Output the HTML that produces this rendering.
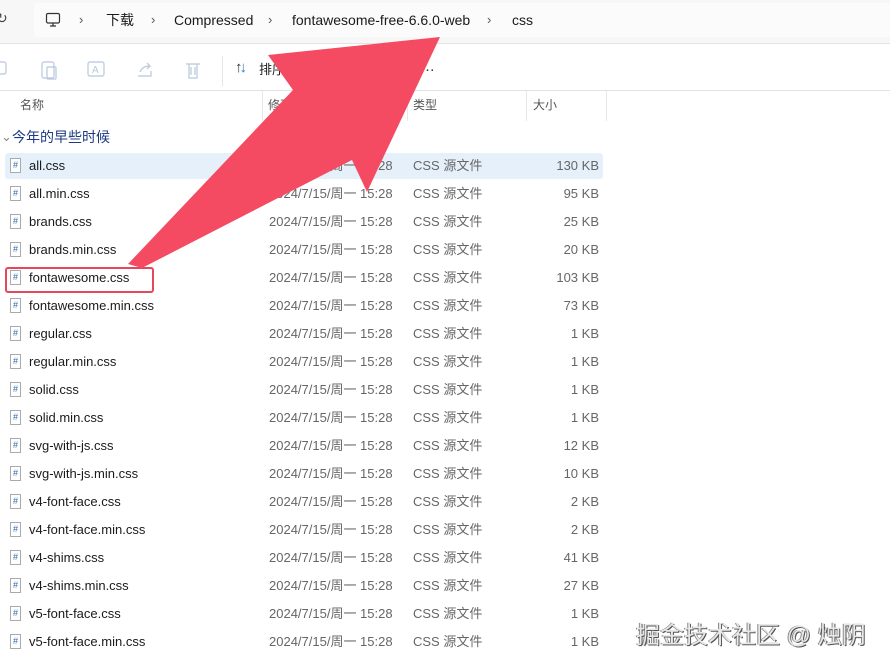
<!DOCTYPE html>
<html><head><meta charset="utf-8"><style>
*{margin:0;padding:0;box-sizing:border-box}
body{width:890px;height:671px;overflow:hidden;background:#fff;font-family:"Liberation Sans","Noto Sans CJK SC",sans-serif;position:relative;color:#1a1a1a}
.a{position:absolute;white-space:nowrap}
.top{position:absolute;left:0;top:0;width:890px;height:44px;background:#f7f7f7;border-bottom:1px solid #e3e3e3}
.addr{position:absolute;left:34px;top:3px;width:856px;height:34px;background:#fbfbfb}
.bc{font-size:14px;color:#1a1a1a;top:11px;line-height:18px}
.chev{font-size:13px;color:#555;top:11px;line-height:18px}
.tb{position:absolute;left:0;top:44px;width:890px;height:47px;border-bottom:1px solid #e2e2e2}
.hd{font-size:12px;color:#555;top:97px;line-height:16px}
.sep{position:absolute;top:91px;width:1px;height:30px;background:#e8e8e8}
.row{position:absolute;left:5px;width:598px;height:26px;font-size:13px;line-height:16px}
.row .n{position:absolute;left:24px;top:5px;color:#1a1a1a}
.row .d{position:absolute;left:264px;top:5px;color:#666}
.row .t{position:absolute;left:408px;top:5px;color:#666}
.row .s{position:absolute;right:4px;top:5px;color:#666}
.ic{position:absolute;left:5px;top:5px;width:11px;height:15px;border:1px solid #aaa;background:#fff;font-size:9px;color:#2a6ab0;text-align:center;line-height:13px}
</style></head><body>
<div class="top"><div class="addr"></div></div>
<div class="a" style="left:-4px;top:10px;font-size:14px;color:#444">↻</div>
<svg class="a" style="left:45px;top:12px" width="16" height="16" viewBox="0 0 16 16"><rect x="1.5" y="1.5" width="13" height="9.5" rx="1.5" fill="none" stroke="#333" stroke-width="1.2"/><path d="M5 14h6M8 11v3" stroke="#333" stroke-width="1.2"/></svg>
<div class="a chev" style="left:79px">›</div>
<div class="a bc" style="left:106px">下载</div>
<div class="a chev" style="left:151px">›</div>
<div class="a bc" style="left:174px">Compressed</div>
<div class="a chev" style="left:268px">›</div>
<div class="a bc" style="left:292px">fontawesome-free-6.6.0-web</div>
<div class="a chev" style="left:487px">›</div>
<div class="a bc" style="left:512px">css</div>
<div class="tb"></div>
<svg class="a" style="left:0;top:58px" width="210" height="24" viewBox="0 0 210 24" fill="none" stroke="#b8c8dc" stroke-width="1.2">
<rect x="-4" y="4" width="10" height="12" rx="2"/>
<rect x="42" y="4" width="12" height="16" rx="2"/><rect x="47" y="9" width="9" height="12" rx="1"/>
<rect x="88" y="4" width="16" height="14" rx="2"/><text x="92" y="15" font-size="10" fill="#b8c8dc" stroke="none">A</text>
<path d="M138 18h13v-5M140 14c2-5 6-6 10-6l-3-3M150 8l-3 3"/>
<path d="M186 6h14M189 6v14h8V6M191 9v8M195 9v8"/>
</svg>
<div class="a" style="left:222px;top:56px;width:1px;height:30px;background:#e6e6e6"></div>
<div class="a" style="left:235px;top:58px;font-size:15px;line-height:20px;color:#333">↑<span style="color:#2a7ad0;margin-left:-3px">↓</span></div>
<div class="a" style="left:259px;top:61px;font-size:13px;line-height:18px">排序</div>
<div class="a" style="left:420px;top:58px;font-size:15px;color:#333">…</div>
<div class="a hd" style="left:20px">名称</div>
<div class="a hd" style="left:268px">修改日期</div>
<div class="a hd" style="left:413px">类型</div>
<div class="a hd" style="left:533px">大小</div>
<div class="sep" style="left:262px"></div><div class="sep" style="left:407px"></div><div class="sep" style="left:526px"></div><div class="sep" style="left:606px"></div>
<div class="a" style="left:1px;top:128px;font-size:13px;line-height:18px;color:#888">⌄</div>
<div class="a" style="left:12px;top:128px;font-size:14px;line-height:18px;color:#1b3a82">今年的早些时候</div>
<div class="row" style="top:153px;background:#e5f0fb;border-radius:3px"><div class="ic">#</div><div class="n">all.css</div><div class="d">2024/7/15/周一 15:28</div><div class="t">CSS 源文件</div><div class="s">130 KB</div></div>
<div class="row" style="top:181px"><div class="ic">#</div><div class="n">all.min.css</div><div class="d">2024/7/15/周一 15:28</div><div class="t">CSS 源文件</div><div class="s">95 KB</div></div>
<div class="row" style="top:209px"><div class="ic">#</div><div class="n">brands.css</div><div class="d">2024/7/15/周一 15:28</div><div class="t">CSS 源文件</div><div class="s">25 KB</div></div>
<div class="row" style="top:237px"><div class="ic">#</div><div class="n">brands.min.css</div><div class="d">2024/7/15/周一 15:28</div><div class="t">CSS 源文件</div><div class="s">20 KB</div></div>
<div class="row" style="top:265px"><div class="ic">#</div><div class="n">fontawesome.css</div><div class="d">2024/7/15/周一 15:28</div><div class="t">CSS 源文件</div><div class="s">103 KB</div></div>
<div class="row" style="top:293px"><div class="ic">#</div><div class="n">fontawesome.min.css</div><div class="d">2024/7/15/周一 15:28</div><div class="t">CSS 源文件</div><div class="s">73 KB</div></div>
<div class="row" style="top:321px"><div class="ic">#</div><div class="n">regular.css</div><div class="d">2024/7/15/周一 15:28</div><div class="t">CSS 源文件</div><div class="s">1 KB</div></div>
<div class="row" style="top:349px"><div class="ic">#</div><div class="n">regular.min.css</div><div class="d">2024/7/15/周一 15:28</div><div class="t">CSS 源文件</div><div class="s">1 KB</div></div>
<div class="row" style="top:377px"><div class="ic">#</div><div class="n">solid.css</div><div class="d">2024/7/15/周一 15:28</div><div class="t">CSS 源文件</div><div class="s">1 KB</div></div>
<div class="row" style="top:405px"><div class="ic">#</div><div class="n">solid.min.css</div><div class="d">2024/7/15/周一 15:28</div><div class="t">CSS 源文件</div><div class="s">1 KB</div></div>
<div class="row" style="top:433px"><div class="ic">#</div><div class="n">svg-with-js.css</div><div class="d">2024/7/15/周一 15:28</div><div class="t">CSS 源文件</div><div class="s">12 KB</div></div>
<div class="row" style="top:461px"><div class="ic">#</div><div class="n">svg-with-js.min.css</div><div class="d">2024/7/15/周一 15:28</div><div class="t">CSS 源文件</div><div class="s">10 KB</div></div>
<div class="row" style="top:489px"><div class="ic">#</div><div class="n">v4-font-face.css</div><div class="d">2024/7/15/周一 15:28</div><div class="t">CSS 源文件</div><div class="s">2 KB</div></div>
<div class="row" style="top:517px"><div class="ic">#</div><div class="n">v4-font-face.min.css</div><div class="d">2024/7/15/周一 15:28</div><div class="t">CSS 源文件</div><div class="s">2 KB</div></div>
<div class="row" style="top:545px"><div class="ic">#</div><div class="n">v4-shims.css</div><div class="d">2024/7/15/周一 15:28</div><div class="t">CSS 源文件</div><div class="s">41 KB</div></div>
<div class="row" style="top:573px"><div class="ic">#</div><div class="n">v4-shims.min.css</div><div class="d">2024/7/15/周一 15:28</div><div class="t">CSS 源文件</div><div class="s">27 KB</div></div>
<div class="row" style="top:601px"><div class="ic">#</div><div class="n">v5-font-face.css</div><div class="d">2024/7/15/周一 15:28</div><div class="t">CSS 源文件</div><div class="s">1 KB</div></div>
<div class="row" style="top:629px"><div class="ic">#</div><div class="n">v5-font-face.min.css</div><div class="d">2024/7/15/周一 15:28</div><div class="t">CSS 源文件</div><div class="s">1 KB</div></div>
<div class="a" style="left:5px;top:267px;width:149px;height:26px;border:2px solid #e5475e;border-radius:3px"></div>
<svg class="a" style="left:0;top:0" width="890" height="671"><polygon points="128,264 293,90 268,55 440,37 367,192 352,160 142,268" fill="#f54b62"/></svg>
<div class="a" style="left:636px;top:620px;font-size:24px;line-height:32px;color:#e8e8e8;text-shadow:1px 1px 0 #555,-1px 0 0 #888">掘金技术社区 @ 烛阴</div>
</body></html>
